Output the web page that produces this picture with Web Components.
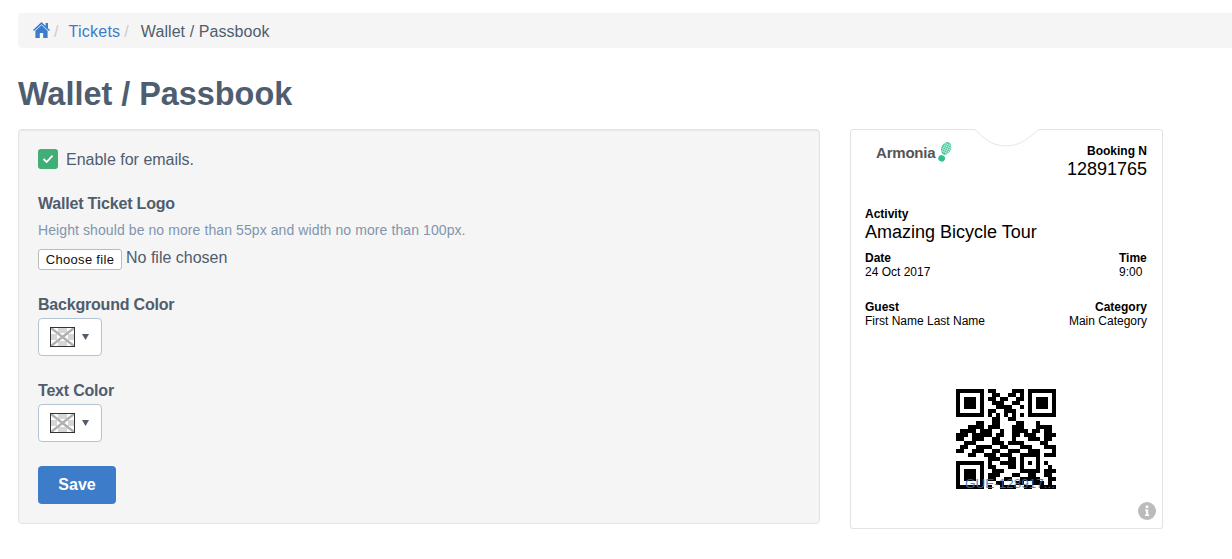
<!DOCTYPE html>
<html lang="en">
<head>
<meta charset="utf-8">
<title>Wallet / Passbook</title>
<style>
    html, body { margin: 0; padding: 0; background: #fff; overflow: hidden; }
    body { font-family: "Liberation Sans", Arial, sans-serif; font-size: 16px; color: #4f5d6d; }
</style>
</head>
<body>
<wallet-page>
    <bread-crumb current="Wallet / Passbook" link="Tickets"></bread-crumb>
    <h1 slot="title">Wallet / Passbook</h1>
    <wallet-form slot="form"></wallet-form>
    <ticket-preview slot="ticket"></ticket-preview>
</wallet-page>

<script>
class WalletPage extends HTMLElement {
    constructor() {
        super();
        this.attachShadow({ mode: 'open' }).innerHTML = `
        <style>
            :host { display: block; padding: 13px 0 0 18px; }
            ::slotted(h1) {
                margin: 24px 0 13px;
                font-size: 32.4px;
                line-height: 44px;
                font-weight: 700;
                color: #4e5d70;
            }
            .columns { display: flex; align-items: flex-start; gap: 30px; }
        </style>
        <slot></slot>
        <slot name="title"></slot>
        <div class="columns">
            <slot name="form"></slot>
            <slot name="ticket"></slot>
        </div>`;
    }
}

class BreadCrumb extends HTMLElement {
    constructor() {
        super();
        this.attachShadow({ mode: 'open' }).innerHTML = `
        <style>
            :host { display: flex; align-items: center; height: 35px; padding-left: 15px; background: #f5f5f5; border-radius: 4px 0 0 4px; font-size: 16px; color: #4f5d6d; }
            svg { width: 17px; height: 16px; margin-top: -2px; fill: #3d7cc9; display: block; }
            span, a { position: relative; top: 1px; letter-spacing: .07px; }
            a { color: #3d7cc9; text-decoration: none; letter-spacing: .25px; }
            .sep { color: #ccc; margin: 0 10px 0 4px; }
            .sep + span { margin-left: 2px; }
        </style>
        <svg viewBox="0 0 17 16"><path d="M8.5 0 L12.6 3.9 V1 H15 V6.2 L17 8.1 L16 9 L8.5 2.2 L1 9 L0 8.1 Z M8.5 3.1 L14.6 8.8 V16 H10.2 V11 H6.8 V16 H2.4 V8.8 Z"/></svg>
        <span class="sep">/</span>
        <a href="#">${this.getAttribute('link')}</a>
        <span class="sep">/</span>
        <span>${this.getAttribute('current')}</span>`;
    }
}

class ColorPicker extends HTMLElement {
    constructor() {
        super();
        this.attachShadow({ mode: 'open' }).innerHTML = `
        <style>
            :host { display: flex; align-items: center; box-sizing: border-box; width: 64px; height: 38px; padding-left: 11px; background: #fff; border: 1px solid #b4c3d4; border-radius: 4px; }
            svg { display: block; }
            .arrow { margin-left: 7px; }
        </style>
        <svg width="25" height="20" viewBox="0 0 25 20">
            <rect x=".5" y=".5" width="24" height="19" fill="#fff"/>
            <path d="M8 1h9v5H8zM8 14h9v5H8zM1 7h6v6H1zM18 7h6v6h-6z" fill="#d6d6d6"/>
            <path d="M1 1 L24 19 M24 1 L1 19" stroke="#b0b0b0" stroke-width="2.4"/>
            <rect x=".5" y=".5" width="24" height="19" fill="none" stroke="#333"/>
        </svg>
        <svg class="arrow" width="7" height="6" viewBox="0 0 7 6"><path d="M0 0H7L3.5 6Z" fill="#4f5d6d"/></svg>`;
    }
}

class WalletForm extends HTMLElement {
    constructor() {
        super();
        this.attachShadow({ mode: 'open' }).innerHTML = `
        <style>
            :host { display: block; box-sizing: border-box; width: 802px; height: 395px; padding: 19px; background: #f5f5f5; border: 1px solid #e3e3e3; border-radius: 4px; box-shadow: inset 0 1px 1px rgba(0,0,0,.05); }
            .check { display: flex; align-items: center; gap: 8px; height: 20px; }
            .check span:last-child { position: relative; top: 1px; }
            .box { display: flex; align-items: center; justify-content: center; width: 20px; height: 20px; border-radius: 3px; background: #41ad77; }
            .label { font-weight: 700; line-height: 22px; letter-spacing: -.2px; }
            .hint { font-size: 14px; line-height: 20px; margin-top: 5px; color: #7f95ae; letter-spacing: .09px; }
            .file { display: flex; align-items: center; gap: 4px; margin-top: 9px; height: 21px; }
            button { font-family: "Liberation Sans", Arial, sans-serif; }
            .choose { box-sizing: border-box; width: 84px; height: 21px; padding: 0; font-size: 13px; letter-spacing: .3px; color: #111; background: #fff; border: 1px solid #bbb; border-radius: 3px; }
            .none { margin-top: -3px; }
            .save { display: block; width: 78px; height: 38px; padding: 0; font-size: 16px; font-weight: 700; color: #fff; background: #3d7cc9; border: 0; border-radius: 4px; }
            .logo { margin-top: 24px; }
            .bg { margin-top: 24px; margin-bottom: 2px; }
            .fg { margin-top: 24px; margin-bottom: 2px; }
            .save { margin-top: 24px; }
        </style>
        <div class="check">
            <span class="box"><svg width="12" height="10" viewBox="0 0 12 10"><path d="M1.5 5 L4.6 8 L10.5 1.6" fill="none" stroke="#fff" stroke-width="1.8"/></svg></span>
            <span>Enable for emails.</span>
        </div>
        <div class="label logo">Wallet Ticket Logo</div>
        <div class="hint">Height should be no more than 55px and width no more than 100px.</div>
        <div class="file"><button class="choose">Choose file</button><span class="none">No file chosen</span></div>
        <div class="label bg">Background Color</div>
        <color-picker></color-picker>
        <div class="label fg">Text Color</div>
        <color-picker></color-picker>
        <button class="save">Save</button>`;
    }
}

class TicketField extends HTMLElement {
    constructor() {
        super();
        this.attachShadow({ mode: 'open' }).innerHTML = `
        <style>
            :host { display: block; font-size: 12px; line-height: 14px; color: #000; }
            .name { font-weight: 700; }
            :host([big]) .value { font-size: 18px; line-height: 22px; }
            :host([end]) { text-align: right; }
        </style>
        <div class="name">${this.getAttribute('name')}</div>
        <div class="value"><slot></slot></div>`;
    }
}

// modulos do QR, 25x25
const QR_ROWS = [
    '1111111011000011101111111',
    '1000001001100110101000001',
    '1011101011011001101011101',
    '1011101001110011001011101',
    '1011101000111100101011101',
    '1000001011001110001000001',
    '1111111010101010101111111',
    '0000000001100110000000000',
    '0000011001100001100010000',
    '0001111011100011100011110',
    '0111101110010011110110110',
    '1110111110110011011100111',
    '1100111001100010001110110',
    '0011100001110111100001100',
    '0110011110011000111000111',
    '1100111001100111001110001',
    '0001100111011100111110111',
    '0000000011100110100010000',
    '1111111010011110101010100',
    '1000001011000110100010010',
    '1011101001110000111110111',
    '1011101011100011001100110',
    '1011101011001100111110011',
    '1000001000110001100111010',
    '1111111010011110011001111'
];

class QrCode extends HTMLElement {
    constructor() {
        super();
        let d = '';
        QR_ROWS.forEach((row, y) => {
            [...row].forEach((c, x) => {
                if (c === '1') d += `M${x} ${y}h1v1h-1z`;
            });
        });
        this.attachShadow({ mode: 'open' }).innerHTML = `
        <style>
            :host { display: block; position: relative; width: 100px; height: 100px; }
            svg { display: block; width: 100px; height: 100px; }
            .code { position: absolute; left: 9px; bottom: -2px; font-size: 13.5px; line-height: 14px; color: #3f6fb4; opacity: .85; white-space: nowrap; }
        </style>
        <svg viewBox="0 0 25 25" shape-rendering="crispEdges"><path d="${d}" fill="#000"/></svg>
        <span class="code">GUE-128917...</span>`;
    }
}

class TicketPreview extends HTMLElement {
    constructor() {
        super();
        this.attachShadow({ mode: 'open' }).innerHTML = `
        <style>
            :host { display: block; position: relative; box-sizing: border-box; width: 313px; height: 400px; padding: 14px 15px 0 14px; background: #fff; border: 1px solid #e3e3e3; border-radius: 3px; box-shadow: 0 1px 1px rgba(0,0,0,.05); }
            .notch { position: absolute; left: 124px; top: -1px; display: block; }
            .head { display: flex; justify-content: space-between; }
            .logo { display: flex; align-items: center; gap: 1px; margin: -4px 0 0 11px; height: 24px; align-self: flex-start; }
            .brand { font-size: 15px; font-weight: 700; color: #555; letter-spacing: -.2px; }
            .row { display: flex; justify-content: space-between; }
            .activity { margin-top: 27px; }
            .when { margin-top: 8px; }
            .who { margin-top: 21px; }
            qr-code { margin: 61px auto 0; }
            .time { width: 28px; }
            .info { position: absolute; right: 6px; bottom: 8px; display: block; }
        </style>
        <svg class="notch" width="63" height="18" viewBox="0 0 63 18">
            <path d="M0 0H63V1C55 8 46 17 31 17C16 17 8 8 0 1Z" fill="#fff"/>
            <path d="M0 1C8 8 16 17 31 17C46 17 55 8 63 1" fill="none" stroke="#e6e6e6"/>
        </svg>
        <div class="head">
            <div class="logo">
                <span class="brand">Armonia</span>
                <svg width="17" height="22" viewBox="0 0 17 22">
                    <g transform="rotate(24 8.5 11)" fill="#2fc08f">
                        <ellipse cx="8.5" cy="7" rx="4.8" ry="6.6"/>
                        <ellipse cx="8.5" cy="18" rx="3.4" ry="3.2"/>
                        <g stroke="#fff" stroke-width=".6" fill="none" opacity=".75">
                            <path d="M4 3H13M4 5H13M4 7H13M4 9H13M4 11H13M6 0V13M8 0V13M10 0V13M12 0V13"/>
                        </g>
                    </g>
                </svg>
            </div>
            <ticket-field name="Booking N" big end>12891765</ticket-field>
        </div>
        <ticket-field class="activity" name="Activity" big>Amazing Bicycle Tour</ticket-field>
        <div class="row when">
            <ticket-field name="Date">24 Oct 2017</ticket-field>
            <ticket-field class="time" name="Time">9:00</ticket-field>
        </div>
        <div class="row who">
            <ticket-field name="Guest">First Name Last Name</ticket-field>
            <ticket-field name="Category" end>Main Category</ticket-field>
        </div>
        <qr-code></qr-code>
        <svg class="info" width="18" height="18" viewBox="0 0 18 18">
            <circle cx="9" cy="9" r="9" fill="#bbb"/>
            <circle cx="9" cy="4.8" r="1.5" fill="#fff"/>
            <path d="M7 7.6H10.2V12.6H11.2V14H7V12.6H8V9H7Z" fill="#fff"/>
        </svg>`;
    }
}

customElements.define('color-picker', ColorPicker);
customElements.define('ticket-field', TicketField);
customElements.define('qr-code', QrCode);
customElements.define('bread-crumb', BreadCrumb);
customElements.define('wallet-form', WalletForm);
customElements.define('ticket-preview', TicketPreview);
customElements.define('wallet-page', WalletPage);
</script>
</body>
</html>
